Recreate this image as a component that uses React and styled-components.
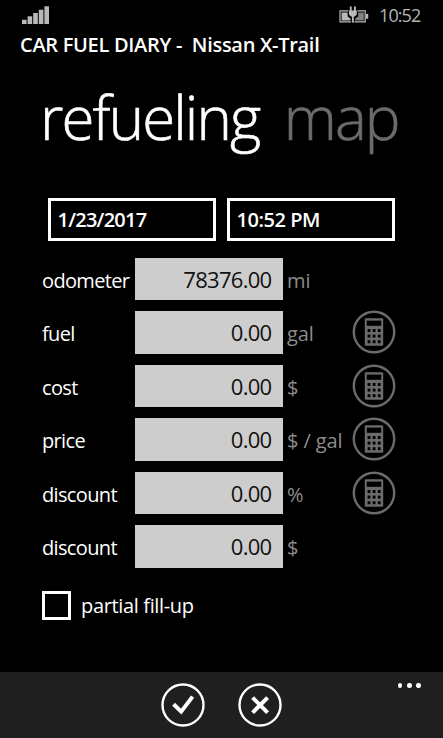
import React, {useState} from "react";
import styled, {createGlobalStyle} from "styled-components";

const rows = [
    {id: "odometer", label: "odometer", value: "78376.00", unit: "mi", calc: false},
    {id: "fuel", label: "fuel", value: "0.00", unit: "gal", calc: true},
    {id: "cost", label: "cost", value: "0.00", unit: "$", calc: true},
    {id: "price", label: "price", value: "0.00", unit: "$ / gal", calc: true},
    {id: "discount-percent", label: "discount", value: "0.00", unit: "%", calc: true},
    {id: "discount-amount", label: "discount", value: "0.00", unit: "$", calc: false},
];

const SignalIcon = () => (
    <svg width="28" height="18" viewBox="0 0 28 18" fill="#b9b9b9">
        <rect x="0" y="13.8" width="4.6" height="4.2"/>
        <rect x="5.6" y="10.3" width="4.6" height="7.7"/>
        <rect x="11.2" y="7" width="4.6" height="11"/>
        <rect x="16.8" y="3.7" width="4.6" height="14.3"/>
        <rect x="22.4" y="0.3" width="4.6" height="17.7"/>
    </svg>
);

const BatteryIcon = () => (
    <svg width="30" height="18" viewBox="0 0 30 18" fill="#b9b9b9">
        <path d="M9.4 4.9H1V15.9H12M18.4 4.9H26.2V15.9H15.4" fill="none" stroke="#b9b9b9" strokeWidth="1.2"/>
        <path d="M2.6 6.4H8.6V10.4L11.4 12.6V14.4H2.6z"/>
        <path d="M19.2 6.4H24.8V14.4H16.2V12.6L19.2 10.4z" opacity=".7"/>
        <rect x="26.8" y="7.9" width="2.4" height="4.8"/>
        <rect x="10.8" y="0.5" width="1.9" height="5"/>
        <rect x="15" y="0.5" width="1.9" height="5"/>
        <path d="M10 4.4H17.8V8.4L15.8 10.4H12L10 8.4z"/>
        <rect x="12.9" y="10" width="1.9" height="6.6"/>
    </svg>
);

const CalculatorIcon = () => (
    <svg width="44" height="44" viewBox="0 0 44 44">
        <circle cx="22" cy="22" r="20.2" fill="none" stroke="#6b6b6b" strokeWidth="2.4"/>
        <rect x="12.8" y="8.2" width="18.4" height="27.6" rx="1" fill="#6b6b6b"/>
        <rect x="14.8" y="10.6" width="14.4" height="5.2" fill="#000"/>
        {[19, 24.6, 30.2].map((y) => [15.6, 20.7, 25.8].map((x) => (
            <rect key={`${x}-${y}`} x={x} y={y} width="2.8" height="3" fill="#000"/>
        )))}
    </svg>
);

const AcceptIcon = () => (
    <svg width="44" height="44" viewBox="0 0 44 44" fill="none" stroke="#fff">
        <circle cx="22" cy="22" r="20.5" strokeWidth="2.4"/>
        <path d="M12.6 21.2L20.2 28.6L31.6 13.6" strokeWidth="4"/>
    </svg>
);

const CancelIcon = () => (
    <svg width="44" height="44" viewBox="0 0 44 44" fill="none" stroke="#fff">
        <circle cx="22" cy="22" r="20.5" strokeWidth="2.4"/>
        <path d="M14.6 14.6L29.6 29.6M29.6 14.6L14.6 29.6" strokeWidth="4"/>
    </svg>
);

const App = () => {
    const [partial, setPartial] = useState(false);

    return (
        <Screen>
            <GlobalStyle/>
            <StatusBar>
                <SignalIcon/>
                <StatusRight>
                    <BatteryIcon/>
                    <Clock>10:52</Clock>
                </StatusRight>
            </StatusBar>
            <AppTitle>CAR FUEL DIARY -&nbsp; Nissan X-Trail</AppTitle>
            <PivotHeader>
                <PivotItem $active>refueling</PivotItem>
                <PivotItem>map</PivotItem>
            </PivotHeader>
            <DateRow>
                <DateBox $tracking="-0.75px">1/23/2017</DateBox>
                <DateBox $tracking="-0.45px">10:52 PM</DateBox>
            </DateRow>
            <Form>
                {rows.map((row) => (
                    <FormRow key={row.id}>
                        <Label>{row.label}</Label>
                        <Value>{row.value}</Value>
                        <Unit>{row.unit}</Unit>
                        {row.calc && <IconButton aria-label="calculate"><CalculatorIcon/></IconButton>}
                    </FormRow>
                ))}
            </Form>
            <CheckRow onClick={() => setPartial(!partial)}>
                <CheckBox $checked={partial}/>
                <CheckLabel>partial fill-up</CheckLabel>
            </CheckRow>
            <AppBar>
                <IconButton aria-label="save"><AcceptIcon/></IconButton>
                <IconButton aria-label="cancel"><CancelIcon/></IconButton>
                <More>
                    <Dot/>
                    <Dot/>
                    <Dot/>
                </More>
            </AppBar>
        </Screen>
    );
};

export default App;

const GlobalStyle = createGlobalStyle`
  * {
    box-sizing: border-box;
  }

  body {
    margin: 0;
    background: #000;
    font-family: "Open Sans", "Noto Sans", sans-serif;
    overflow: hidden;
  }

  svg {
    display: block;
  }
`;

const Screen = styled.div`
  width: 443px;
  height: 738px;
  display: flex;
  flex-direction: column;
  background: #000;
  color: #fff;
  white-space: nowrap;
`;

const StatusBar = styled.div`
  height: 32px;
  padding: 6px 22px 0 22px;
  display: flex;
  justify-content: space-between;
  align-items: flex-start;
`;

const StatusRight = styled.div`
  display: flex;
  gap: 10px;
`;

const Clock = styled.span`
  width: 42px;
  font-size: 18px;
  line-height: 19px;
  letter-spacing: -0.9px;
  color: #b4b4b4;
`;

const AppTitle = styled.h1`
  margin: 0;
  padding-left: 20px;
  height: 26px;
  font-size: 20px;
  line-height: 25px;
  font-weight: 600;
  letter-spacing: -0.3px;
`;

const PivotHeader = styled.div`
  height: 140px;
  padding: 20px 0 0 40px;
  display: flex;
  gap: 24.5px;
`;

const PivotItem = styled.span`
  font-size: 60px;
  line-height: 79px;
  font-weight: 300;
  letter-spacing: -1.9px;
  -webkit-text-stroke: 0.6px currentColor;
  color: ${(props) => (props.$active ? "#fff" : "#6b6b6b")};
`;

const DateRow = styled.div`
  padding-left: 48px;
  display: flex;
  gap: 11px;
`;

const DateBox = styled.div`
  width: 168px;
  height: 43px;
  padding-left: 6.5px;
  border: 3px solid #fff;
  font-size: 20px;
  line-height: 38px;
  font-weight: 600;
  letter-spacing: ${(props) => props.$tracking};
`;

const Form = styled.div`
  padding: 16.5px 0 0 42px;
  display: flex;
  flex-direction: column;
  gap: 11px;
`;

const FormRow = styled.div`
  height: 42.5px;
  display: grid;
  grid-template-columns: 93px 148px 69px 44px;
  grid-template-rows: 42.5px;
  align-items: center;
`;

const Label = styled.label`
  font-size: 20px;
  line-height: 42px;
  padding-top: 4px;
  letter-spacing: -0.65px;
`;

const Value = styled.div`
  height: 42.5px;
  padding-right: 11.5px;
  background: #cdcdcd;
  color: #111;
  font-size: 22px;
  line-height: 43px;
  letter-spacing: -0.7px;
  text-align: right;
`;

const Unit = styled.span`
  padding: 3px 0 0 4px;
  color: #8c8c8c;
  font-size: 20px;
  letter-spacing: -0.1px;
`;

const IconButton = styled.button`
  width: 44px;
  height: 44px;
  padding: 0;
  border: none;
  background: none;
  cursor: pointer;
`;

const CheckRow = styled.div`
  padding: 22.5px 0 0 42px;
  display: flex;
  align-items: center;
  gap: 10px;
  cursor: pointer;
`;

const CheckBox = styled.div`
  width: 29px;
  height: 29px;
  border: 3px solid #fff;
  background: ${(props) => (props.$checked ? "#fff" : "transparent")};
`;

const CheckLabel = styled.span`
  padding-top: 1px;
  font-size: 20px;
  line-height: 29px;
  letter-spacing: -0.35px;
`;

const AppBar = styled.div`
  height: 66px;
  margin-top: auto;
  padding: 11px 22px 0 161px;
  display: flex;
  gap: 33px;
  background: #1f1f1f;
`;

const More = styled.div`
  margin-left: auto;
  display: flex;
  gap: 4.8px;
`;

const Dot = styled.span`
  width: 4.6px;
  height: 4.6px;
  border-radius: 50%;
  background: #fff;
`;
